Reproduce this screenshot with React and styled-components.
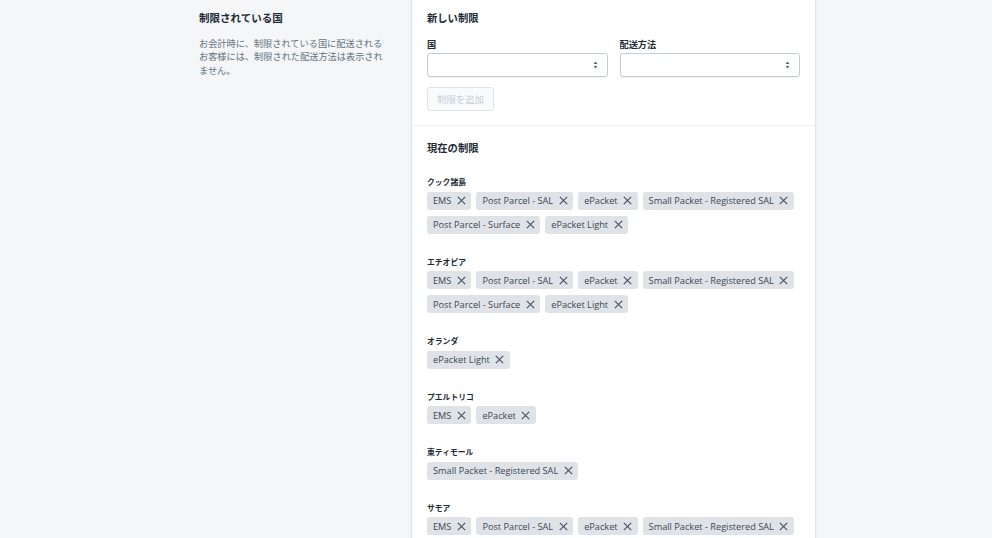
import React from "react";
import styled, { createGlobalStyle } from "styled-components";

const GlobalStyle = createGlobalStyle`
  html, body {
    margin: 0;
    padding: 0;
    background: #f4f6f8;
  }
  body {
    font-family: "Open Sans", "Noto Sans CJK JP", sans-serif;
    color: #212b36;
  }
`;

const Layout = styled.div`
  display: flex;
  align-items: flex-start;
  gap: 18px;
  margin: -4px 0 0 199px;
`;

const Aside = styled.div`
  width: 195px;
  padding-top: 14px;
`;

const AsideTitle = styled.div`
  font-size: 10.5px;
  line-height: 17px;
  font-weight: 700;
  color: #212b36;
`;

const AsideText = styled.p`
  margin: 10px 0 0;
  width: 190px;
  font-size: 9.2px;
  line-height: 13.3px;
  color: #637381;
`;

const Card = styled.div`
  width: 403px;
  background: #fff;
  border-radius: 3px;
  box-shadow: 0 0 0 1px rgba(63, 63, 68, 0.05), 0 1px 3px 0 rgba(63, 63, 68, 0.15);
`;

const Section = styled.div`
  padding: 14px 15px;
  & + & {
    border-top: 1px solid #eceff2;
  }
`;

const Heading = styled.h2`
  margin: 0 0 ${(p) => p.$gap}px;
  font-size: 10.3px;
  line-height: 17px;
  font-weight: 700;
`;

const FieldRow = styled.div`
  display: flex;
  gap: 12px;
`;

const Field = styled.div`
  flex: 1;
  display: flex;
  flex-direction: column;
`;

const Label = styled.label`
  font-size: 9.2px;
  line-height: 13px;
  font-weight: 700;
  margin-bottom: 2.5px;
`;

const SelectBox = styled.div`
  height: 24px;
  box-sizing: border-box;
  border: 1px solid #c4cdd5;
  border-radius: 3px;
  background: #fff;
  box-shadow: 0 1px 0 0 rgba(22, 29, 37, 0.05);
  display: flex;
  align-items: center;
  justify-content: flex-end;
  padding-right: 9px;
`;

const AddButton = styled.button`
  margin-top: 10px;
  height: 24px;
  width: 67px;
  box-sizing: border-box;
  border: 1px solid #dfe3e8;
  border-radius: 3px;
  background: #f9fafb;
  color: #c4cdd5;
  font-family: inherit;
  font-size: 9.4px;
  padding: 0;
`;

const Group = styled.div`
  margin-bottom: 22px;
`;

const Country = styled.div`
  font-size: 7.8px;
  line-height: 12px;
  font-weight: 700;
  margin-bottom: 3.5px;
`;

const TagList = styled.div`
  display: flex;
  flex-wrap: wrap;
  gap: 6px 5px;
`;

const Tag = styled.span`
  display: inline-flex;
  align-items: center;
  height: 18px;
  padding-left: 6px;
  background: #dfe3e8;
  border-radius: 3px;
  font-size: 9.2px;
  color: #3d4650;
  white-space: nowrap;
`;

const Remove = styled.span`
  width: 20px;
  height: 18px;
  display: inline-flex;
  align-items: center;
  justify-content: center;
  color: #454f5b;
`;

const Caret = () => (
  <svg width="5" height="8" viewBox="0 0 5 8">
    <path d="M2.5 0.5 L4.5 3 L0.5 3 Z" fill="#5c6670" />
    <path d="M2.5 7.5 L4.5 5 L0.5 5 Z" fill="#5c6670" />
  </svg>
);

const Cross = () => (
  <svg width="9" height="9" viewBox="0 0 9 9">
    <path d="M0.8 0.8 L8.2 8.2 M8.2 0.8 L0.8 8.2" stroke="currentColor" strokeWidth="1.1" />
  </svg>
);

const all = [
  "EMS",
  "Post Parcel - SAL",
  "ePacket",
  "Small Packet - Registered SAL",
  "Post Parcel - Surface",
  "ePacket Light",
];

const groups = [
  { name: "クック諸島", items: all },
  { name: "エチオピア", items: all },
  { name: "オランダ", items: ["ePacket Light"] },
  { name: "プエルトリコ", items: ["EMS", "ePacket"] },
  { name: "東ティモール", items: ["Small Packet - Registered SAL"] },
  { name: "サモア", items: all.slice(0, 4) },
];

export default function App() {
  return (
    <>
      <GlobalStyle />
      <Layout>
        <Aside>
          <AsideTitle>制限されている国</AsideTitle>
          <AsideText>
            お会計時に、制限されている国に配送されるお客様には、制限された配送方法は表示されません。
          </AsideText>
        </Aside>
        <Card>
          <Section>
            <Heading $gap={10.5}>新しい制限</Heading>
            <FieldRow>
              <Field>
                <Label>国</Label>
                <SelectBox>
                  <Caret />
                </SelectBox>
              </Field>
              <Field>
                <Label>配送方法</Label>
                <SelectBox>
                  <Caret />
                </SelectBox>
              </Field>
            </FieldRow>
            <AddButton disabled>制限を追加</AddButton>
          </Section>
          <Section>
            <Heading $gap={19}>現在の制限</Heading>
            {groups.map((g) => (
              <Group key={g.name}>
                <Country>{g.name}</Country>
                <TagList>
                  {g.items.map((item) => (
                    <Tag key={item}>
                      {item}
                      <Remove>
                        <Cross />
                      </Remove>
                    </Tag>
                  ))}
                </TagList>
              </Group>
            ))}
          </Section>
        </Card>
      </Layout>
    </>
  );
}
